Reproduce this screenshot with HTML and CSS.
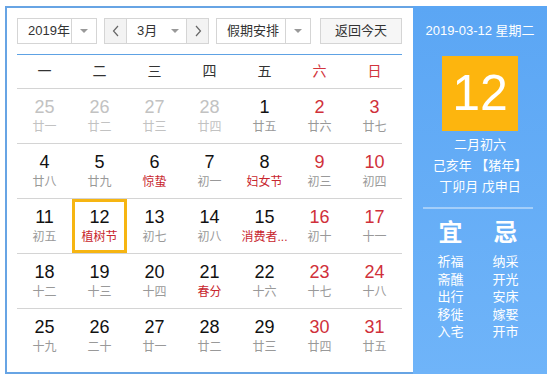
FILE: index.html
```html
<!DOCTYPE html>
<html lang="zh-CN">
<head>
    <meta charset="UTF-8">
    <meta name="viewport" content="width=device-width, initial-scale=1.0">
    <title>万年历</title>
    <link rel="stylesheet" href="styles.css">
</head>
<body>
    <div class="calendar">
        <div class="main">
            <div class="toolbar">
                <div class="select year">
                    <span class="select-text">2019年</span>
                    <span class="select-arrow"><i class="caret"></i></span>
                </div>
                <div class="select month">
                    <span class="nav">
                        <svg width="8" height="12" viewBox="0 0 8 12"><polyline points="6,1 1.5,6 6,11" fill="none" stroke="#666" stroke-width="1.2"/></svg>
                    </span>
                    <span class="select-text">3月</span>
                    <span class="month-caret"><i class="caret"></i></span>
                    <span class="nav next">
                        <svg width="8" height="12" viewBox="0 0 8 12"><polyline points="2,1 6.5,6 2,11" fill="none" stroke="#666" stroke-width="1.2"/></svg>
                    </span>
                </div>
                <div class="select holiday">
                    <span class="select-text">假期安排</span>
                    <span class="select-arrow"><i class="caret"></i></span>
                </div>
                <div class="btn-today">返回今天</div>
            </div>

            <div class="weekdays">
                <span>一</span><span>二</span><span>三</span><span>四</span><span>五</span>
                <span class="weekend">六</span><span class="weekend">日</span>
            </div>

            <div class="days">
                <div class="week">
                    <div class="day other"><b>25</b><small>廿一</small></div>
                    <div class="day other"><b>26</b><small>廿二</small></div>
                    <div class="day other"><b>27</b><small>廿三</small></div>
                    <div class="day other"><b>28</b><small>廿四</small></div>
                    <div class="day"><b>1</b><small>廿五</small></div>
                    <div class="day rest"><b>2</b><small>廿六</small></div>
                    <div class="day rest"><b>3</b><small>廿七</small></div>
                </div>
                <div class="week">
                    <div class="day"><b>4</b><small>廿八</small></div>
                    <div class="day"><b>5</b><small>廿九</small></div>
                    <div class="day"><b>6</b><small class="fest">惊蛰</small></div>
                    <div class="day"><b>7</b><small>初一</small></div>
                    <div class="day"><b>8</b><small class="fest">妇女节</small></div>
                    <div class="day rest"><b>9</b><small>初三</small></div>
                    <div class="day rest"><b>10</b><small>初四</small></div>
                </div>
                <div class="week">
                    <div class="day"><b>11</b><small>初五</small></div>
                    <div class="day selected"><b>12</b><small class="fest">植树节</small></div>
                    <div class="day"><b>13</b><small>初七</small></div>
                    <div class="day"><b>14</b><small>初八</small></div>
                    <div class="day"><b>15</b><small class="fest">消费者...</small></div>
                    <div class="day rest"><b>16</b><small>初十</small></div>
                    <div class="day rest"><b>17</b><small>十一</small></div>
                </div>
                <div class="week">
                    <div class="day"><b>18</b><small>十二</small></div>
                    <div class="day"><b>19</b><small>十三</small></div>
                    <div class="day"><b>20</b><small>十四</small></div>
                    <div class="day"><b>21</b><small class="fest">春分</small></div>
                    <div class="day"><b>22</b><small>十六</small></div>
                    <div class="day rest"><b>23</b><small>十七</small></div>
                    <div class="day rest"><b>24</b><small>十八</small></div>
                </div>
                <div class="week">
                    <div class="day"><b>25</b><small>十九</small></div>
                    <div class="day"><b>26</b><small>二十</small></div>
                    <div class="day"><b>27</b><small>廿一</small></div>
                    <div class="day"><b>28</b><small>廿二</small></div>
                    <div class="day"><b>29</b><small>廿三</small></div>
                    <div class="day rest"><b>30</b><small>廿四</small></div>
                    <div class="day rest"><b>31</b><small>廿五</small></div>
                </div>
            </div>
        </div>

        <div class="panel">
            <div class="panel-date">2019-03-12 星期二</div>
            <div class="panel-day">12</div>
            <div class="panel-lunar">
                <p>二月初六</p>
                <p>己亥年 【猪年】</p>
                <p>丁卯月 戊申日</p>
            </div>
            <div class="panel-line"></div>
            <div class="almanac">
                <div class="almanac-col">
                    <h3>宜</h3>
                    <p>祈福</p><p>斋醮</p><p>出行</p><p>移徙</p><p>入宅</p>
                </div>
                <div class="almanac-col">
                    <h3>忌</h3>
                    <p>纳采</p><p>开光</p><p>安床</p><p>嫁娶</p><p>开市</p>
                </div>
            </div>
        </div>
    </div>
</body>
</html>
```

FILE: styles.css
```css
html, body {
    margin: 0;
    overflow: hidden;
}
body {
    font-family: "Liberation Sans", "Noto Sans CJK SC", sans-serif;
    background-color: #fff;
    color: #333;
}
* {
    box-sizing: border-box;
}
.calendar {
    display: flex;
    width: 542px;
    margin: 6px 0 0 5px;
}
.main {
    width: 408px;
    flex: none;
    border: 2px solid #67a4e4;
    border-right: none;
    padding: 10px 11px 9px 10px;
}

/* toolbar */
.toolbar {
    display: flex;
    height: 26px;
    margin-bottom: 10px;
    font-size: 13px;
}
.select {
    display: flex;
    height: 26px;
    border: 1px solid #d5d5d5;
    background-color: #fff;
    line-height: 24px;
}
.select-text {
    padding-left: 10px;
    flex: 1;
    white-space: nowrap;
}
.select-arrow {
    width: 25px;
    border-left: 1px solid #d5d5d5;
    display: flex;
    align-items: center;
    justify-content: center;
}
.caret {
    width: 0;
    height: 0;
    border-left: 4px solid transparent;
    border-right: 4px solid transparent;
    border-top: 4px solid #999;
}
.year {
    width: 80px;
}
.month {
    width: 105px;
    margin-left: 7px;
}
.month .select-text {
    flex: none;
    width: 36px;
}
.month-caret {
    width: 24px;
    display: flex;
    align-items: center;
    justify-content: center;
}
.nav {
    width: 22px;
    flex: none;
    background-color: #f3f3f3;
    border-right: 1px solid #d5d5d5;
    display: flex;
    align-items: center;
    justify-content: center;
}
.nav.next {
    border-right: none;
    border-left: 1px solid #d5d5d5;
}
.holiday {
    width: 95px;
    margin-left: 7px;
}
.btn-today {
    width: 82px;
    height: 26px;
    margin-left: 9px;
    border: 1px solid #d5d5d5;
    background-color: #f6f6f6;
    text-align: center;
    line-height: 24px;
}

/* weekday header */
.weekdays {
    display: grid;
    grid-template-columns: repeat(7, 55px);
    height: 35px;
    border-top: 1px solid #5ea2e4;
    border-bottom: 1px solid #d4d4d4;
    font-size: 14px;
    line-height: 33px;
    text-align: center;
    color: #333;
}
.weekend {
    color: #d2343c;
}

/* days */
.week {
    display: grid;
    grid-template-columns: repeat(7, 55px);
    height: 55px;
    border-bottom: 1px solid #d4d4d4;
}
.week:last-child {
    border-bottom: none;
    height: 54px;
}
.day {
    display: flex;
    flex-direction: column;
    align-items: center;
    justify-content: center;
}
.day b {
    font-weight: normal;
    font-size: 18px;
    line-height: 20px;
    color: #111;
}
.day small {
    display: block;
    margin-top: 2px;
    font-size: 12px;
    line-height: 16px;
    color: #999;
    white-space: nowrap;
}
.day.other b,
.day.other small {
    color: #c2c2c2;
}
.day.rest b {
    color: #d0303a;
}
.day small.fest {
    color: #c8262e;
}
.day.selected {
    box-shadow: inset 0 0 0 3px #f6b512;
}

/* right panel */
.panel {
    width: 134px;
    flex: none;
    background: linear-gradient(#5ba6f4, #6fb4f9);
    color: #fff;
    text-align: center;
    padding-top: 15px;
}
.panel-date {
    font-size: 13px;
    line-height: 20px;
    white-space: nowrap;
}
.panel-day {
    width: 76px;
    height: 75px;
    margin: 15px auto 0;
    background-color: #fdb50e;
    font-size: 50px;
    line-height: 75px;
}
.panel-lunar {
    margin-top: 3px;
    font-size: 13px;
    line-height: 21px;
}
.panel-lunar p {
    margin: 0;
    white-space: nowrap;
}
.panel-line {
    width: 110px;
    margin: 10px 0 0 10px;
    border-top: 2px solid rgba(255, 255, 255, 0.4);
}
.almanac {
    display: grid;
    grid-template-columns: 55px 55px;
    margin: 9px 0 0 10px;
}
.almanac h3 {
    margin: 0 0 5px;
    font-size: 24px;
    line-height: 30px;
    font-weight: bold;
}
.almanac p {
    margin: 0;
    font-size: 13px;
    line-height: 17.5px;
}
```
